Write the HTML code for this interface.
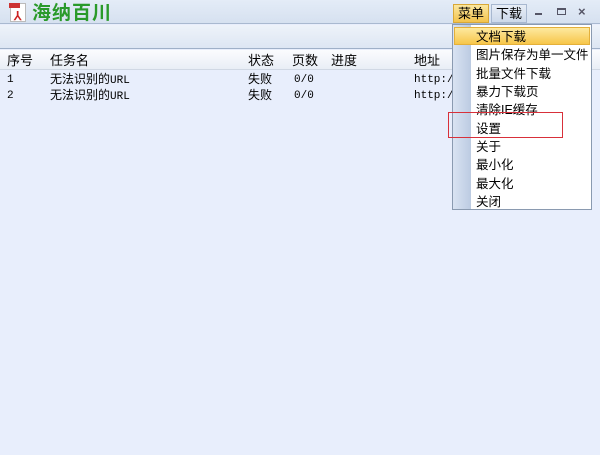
<!DOCTYPE html>
<html><head><meta charset="utf-8"><style>
*{margin:0;padding:0;box-sizing:border-box}
body{width:600px;height:455px;overflow:hidden;background:#e8eefc;font-family:"Liberation Sans","Noto Sans CJK SC","WenQuanYi Zen Hei",sans-serif;font-size:12px;color:#000;position:relative}
.abs{position:absolute;white-space:nowrap;line-height:14px}
#title{left:0;top:0;width:600px;height:24px;background:linear-gradient(#e4ecf7,#d6e1f0);border-bottom:1px solid #a9b9d0}
#tool{left:0;top:25px;width:600px;height:24px;background:linear-gradient(#eef3fa,#dde6f3);border-bottom:1px solid #9fb0c8}
#hdr{left:0;top:50px;width:600px;height:20px;background:linear-gradient(#fbfcfe,#e9eef6);border-bottom:1px solid #d0d8e4}
.h{top:54px;font-size:13px}
.r{font-size:12px}
.mono{font-family:"Liberation Mono",monospace;font-size:11px}
#menu{left:452px;top:24px;width:140px;height:186px;background:#fff;border:1px solid #8a9ab0;line-height:normal}
#strip{left:0;top:0;width:18px;height:184px;background:linear-gradient(90deg,#d9e3f2,#bccbe2)}
.mi{position:absolute;left:23px;font-size:12.5px;height:18px;line-height:18px;white-space:nowrap}
#sel{left:1px;top:2px;width:136px;height:18px;background:linear-gradient(#fde9a0,#f7c64a);border:1px solid #e4b03a}
.btn{top:4px;height:19px;line-height:17px;font-size:13px;padding:0 4px}
</style></head><body>
<div id="title" class="abs"></div>
<div class="abs" style="left:10px;top:3px;width:16px;height:19px;background:#fff;border:1px solid #bbb"></div>
<div class="abs" style="left:9px;top:3px;width:11px;height:5px;background:#c33"></div>
<div class="abs" style="left:14px;top:9px;color:#c22;font-size:12px;font-weight:bold">⅄</div>
<div class="abs" style="left:32px;top:3px;font-size:19px;line-height:22px;font-weight:bold;color:#2a9a2a;letter-spacing:1px">海纳百川</div>
<div class="abs btn" style="left:453px;background:linear-gradient(#fbe7a0,#f3c34c);border:1px solid #d8a838">菜单</div>
<div class="abs btn" style="left:491px;background:linear-gradient(#e8eef7,#cdd9ea);border:1px solid #a8b8d0">下载</div>
<div class="abs" style="left:535px;top:13px;width:7px;height:2px;background:#556"></div>
<div class="abs" style="left:557px;top:8px;width:9px;height:7px;border:1px solid #556;border-top-width:2px"></div>
<div class="abs" style="left:578px;top:5px;font-size:13px;font-weight:bold;color:#556">×</div>
<div id="tool" class="abs"></div>
<div id="hdr" class="abs"></div>
<div class="abs h" style="left:7px">序号</div>
<div class="abs h" style="left:50px">任务名</div>
<div class="abs h" style="left:248px">状态</div>
<div class="abs h" style="left:292px">页数</div>
<div class="abs h" style="left:331px">进度</div>
<div class="abs h" style="left:414px">地址</div>
<div class="abs mono" style="left:7px;top:73px">1</div>
<div class="abs r" style="left:50px;top:72px">无法识别的<span class="mono">URL</span></div>
<div class="abs r" style="left:248px;top:72px">失败</div>
<div class="abs mono" style="left:294px;top:73px">0/0</div>
<div class="abs mono" style="left:414px;top:73px">http:/</div>
<div class="abs mono" style="left:7px;top:89px">2</div>
<div class="abs r" style="left:50px;top:88px">无法识别的<span class="mono">URL</span></div>
<div class="abs r" style="left:248px;top:88px">失败</div>
<div class="abs mono" style="left:294px;top:89px">0/0</div>
<div class="abs mono" style="left:414px;top:89px">http:/</div>
<div id="menu" class="abs">
<div id="strip" class="abs"></div>
<div id="sel" class="abs"></div>
<div class="mi" style="top:3px">文档下载</div>
<div class="mi" style="top:21px">图片保存为单一文件</div>
<div class="mi" style="top:40px">批量文件下载</div>
<div class="mi" style="top:58px">暴力下载页</div>
<div class="mi" style="top:76px">清除IE缓存</div>
<div class="mi" style="top:95px">设置</div>
<div class="mi" style="top:113px">关于</div>
<div class="mi" style="top:131px">最小化</div>
<div class="mi" style="top:150px">最大化</div>
<div class="mi" style="top:168px">关闭</div>
</div>
<div class="abs" style="left:448px;top:112px;width:115px;height:26px;border:1px solid #d8303a"></div>
</body></html>
